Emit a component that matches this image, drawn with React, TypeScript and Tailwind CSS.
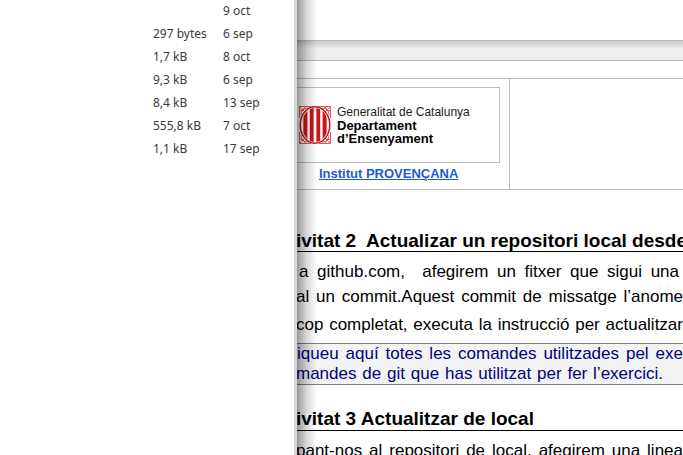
import React from "react";

const files = [
  { size: "", date: "9 oct" },
  { size: "297 bytes", date: "6 sep" },
  { size: "1,7 kB", date: "8 oct" },
  { size: "9,3 kB", date: "6 sep" },
  { size: "8,4 kB", date: "13 sep" },
  { size: "555,8 kB", date: "7 oct" },
  { size: "1,1 kB", date: "17 sep" },
];

function FileList() {
  return (
    <aside className="w-[297px] shrink-0 overflow-hidden border-r-[3px] border-[#d6d6d6] bg-white pl-[153px] font-['Noto_Sans',sans-serif] text-xs text-[#3b3b3b]">
      <table className="-mt-px border-collapse">
        <tbody>
          {files.map((file, i) => (
            <tr key={i} className="h-[23px]">
              <td className="w-[70px] p-0 whitespace-nowrap">{file.size}</td>
              <td className="p-0 whitespace-nowrap">{file.date}</td>
            </tr>
          ))}
        </tbody>
      </table>
    </aside>
  );
}

function Crest() {
  return (
    <svg viewBox="0 0 32 38" className="h-[38px] w-8 shrink-0" aria-hidden="true">
      <defs>
        <clipPath id="shield">
          <ellipse cx="16" cy="19" rx="13.2" ry="17" />
        </clipPath>
      </defs>
      <g fill="none" stroke="#d9474b" strokeWidth="0.9">
        <path d="M0.5 12V0.5H12M20 0.5h11.5V12M31.5 26v11.5H20M12 37.5H0.5V26" />
        <path d="M1 1l7 7M31 1l-7 7M1 37l7-7M31 37l-7-7M2 9q0-7 7-7M30 9q0-7-7-7M2 29q0 7 7 7M30 29q0 7-7 7M1 5q4 0 5-4M31 5q-4 0-5-4M1 33q4 0 5 4M31 33q-4 0-5 4" />
      </g>
      <ellipse cx="16" cy="19" rx="14.8" ry="18.2" fill="#fff" stroke="#cc1118" strokeWidth="1.5" />
      <g clipPath="url(#shield)" fill="#cc1118">
        <rect x="4.4" y="0" width="4" height="38" />
        <rect x="10.8" y="0" width="3.8" height="38" />
        <rect x="17.4" y="0" width="3.8" height="38" />
        <rect x="23.6" y="0" width="4" height="38" />
      </g>
    </svg>
  );
}

function Header() {
  return (
    <header className="flex h-28 border-y border-[#bdbdbd]">
      <div className="w-[213px] shrink-0 border-r border-[#bdbdbd] pt-2 pr-[9px]">
        <div className="flex h-[76px] items-center border-y border-r border-[#bdbdbd] pl-[2px]">
          <Crest />
          <p className="pl-[6px] text-xs leading-[13px] whitespace-nowrap text-[#1a1a1a]">
            Generalitat de Catalunya
            <strong className="block text-[13px] leading-[13px] text-black">Departament</strong>
            <strong className="block text-[13px] leading-[13px] text-black">d’Ensenyament</strong>
          </p>
        </div>
        <a href="#institut" className="ml-[22px] block pt-[3px] text-[13px] leading-4 font-bold text-[#1b5bd2] underline">
          Institut PROVENÇANA
        </a>
      </div>
    </header>
  );
}

function Document() {
  return (
    <main className="relative min-w-0 flex-1 overflow-hidden bg-white font-['Liberation_Sans',Arial,sans-serif] text-black">
      <div className="h-10" />
      <div className="h-[21px] border-y border-[#b8b8b8] bg-linear-to-b from-[#c8c8c8] to-[#eeeeee] to-40%" />
      <div className="pt-[17px]">
        <Header />
      </div>
      <article className="pt-10 text-[17px]">
        <h2 className="-ml-px h-[22px] border-b border-black text-[19px] leading-[22px] font-bold whitespace-pre">
          ivitat 2  Actualizar un repositori local desde
        </h2>
        <div className="leading-[25px] [text-align-last:justify]">
          <p className="mr-1 pt-[7px] pl-[2px] whitespace-pre-wrap">a github.com,  afegirem un fitxer que sigui una</p>
          <p className="-ml-px">al un commit.Aquest commit de missatge l’anome</p>
          <p className="-ml-px pt-[3px]">cop completat, executa la instrucció per actualitzar</p>
        </div>
        <div className="mt-[6px] border-y border-[#808080] bg-[#f3f3f3] leading-5 text-[#000080] [text-align-last:justify]">
          <p>iqueu aquí totes les comandes utilitzades pel exe</p>
          <p className="-ml-px mr-5">mandes de git que has utilitzat per fer l’exercici.</p>
        </div>
        <h2 className="mt-[23px] -ml-px h-[23px] border-b border-black text-[19px] leading-[22px] font-bold">
          ivitat 3 Actualitzar de local
        </h2>
        <p className="-ml-px pt-[7px] leading-[25px] [text-align-last:justify]">pant-nos al repositori de local, afegirem una linea</p>
      </article>
      <div className="pointer-events-none absolute inset-y-0 left-0 w-5 bg-linear-to-r from-black/40 via-black/15 to-transparent" />
    </main>
  );
}

export default function App() {
  return (
    <div className="flex h-screen overflow-hidden bg-white">
      <FileList />
      <Document />
    </div>
  );
}
